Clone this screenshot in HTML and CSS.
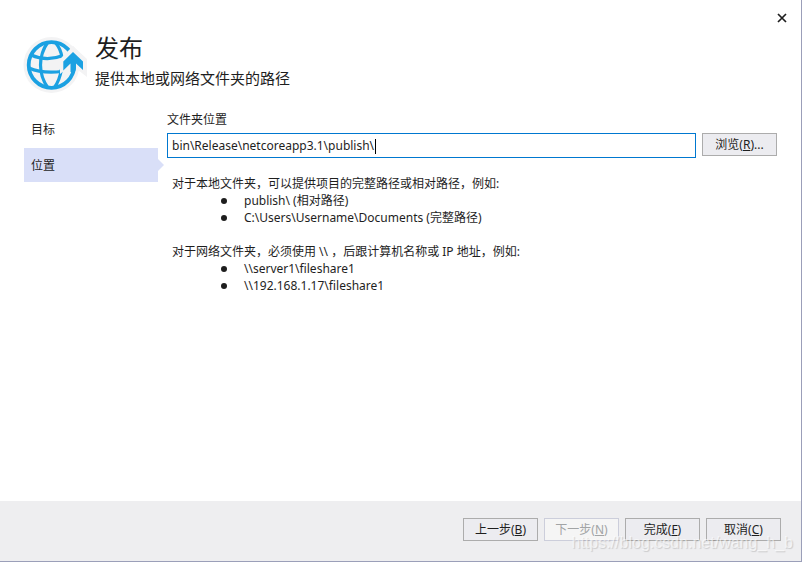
FILE: index.html
```
<!DOCTYPE html>
<html lang="zh-CN">
<head>
	<meta charset="UTF-8">
	<title>发布</title>
	<link rel="stylesheet" href="styles.css">
</head>

<body>
	<div class="dialog">
		<button class="close" type="button" aria-label="关闭">
			<svg width="10" height="10" viewBox="0 0 10 10">
				<path d="M1 1l8 8M9 1l-8 8" fill="none" stroke="#1e1e1e" stroke-width="1.7"/>
			</svg>
		</button>

		<header class="header">
			<svg class="logo" width="67" height="58" viewBox="0 0 67 58">
				<circle cx="31.500" cy="29" r="28" fill="#f3f3f4"/>
				<path d="M53 10L67 24V41L58 34H40V24z" fill="#f3f3f4"/>
				<g fill="none" stroke="#1ba1e2">
					<circle cx="31.500" cy="29" r="22.800" stroke-width="3.800"/>
					<path d="M28 6C18 20 18 38 28 52M35 6C40 12 41.500 16 42 22M41.500 33C40 42 38 47 34 52" stroke-width="3.200"/>
					<path d="M11 19C21 23.500 33 23.500 43 19.500M9 32C19 36.500 30 37 42 35.500" stroke-width="3.200"/>
				</g>
				<!-- gap between the globe and the arrow -->
				<path d="M53 10L40 23V38L49 31H58L67 38V23z" fill="#f3f3f4"/>
				<path d="M53 16L43.300 25.500V34.500L50.500 27.500V36L54.500 37L56 32V27.500L63 34V25.500z" fill="#1ba1e2"/>
			</svg>
			<div>
				<h1>发布</h1>
				<p>提供本地或网络文件夹的路径</p>
			</div>
		</header>

		<div class="content">
			<nav class="steps">
				<a href="#target">目标</a>
				<a class="active" href="#location">位置</a>
			</nav>

			<main class="panel">
				<label for="folder">文件夹位置</label>
				<div class="folder-row">
					<div class="field">
						<input id="folder" type="text" value="bin\Release\netcoreapp3.1\publish\">
						<span class="caret"></span>
					</div>
					<button type="button">浏览(<u>R</u>)...</button>
				</div>

				<div class="help">
					<p>对于本地文件夹，可以提供项目的完整路径或相对路径，例如:</p>
					<ul>
						<li>publish\ (相对路径)</li>
						<li>C:\Users\Username\Documents (完整路径)</li>
					</ul>
					<p>对于网络文件夹，必须使用 \\ ，后跟计算机名称或 IP 地址，例如:</p>
					<ul>
						<li>\\server1\fileshare1</li>
						<li>\\192.168.1.17\fileshare1</li>
					</ul>
				</div>
			</main>
		</div>

		<footer class="footer">
			<button type="button">上一步(<u>B</u>)</button>
			<button type="button" disabled>下一步(<u>N</u>)</button>
			<button type="button">完成(<u>F</u>)</button>
			<button type="button">取消(<u>C</u>)</button>
			<span class="watermark">https://blog.csdn.net/wang_h_b</span>
		</footer>
	</div>
</body>
</html>
```
FILE: styles.css
```
* {
	box-sizing: border-box;
}

body {
	margin: 0;
	background-color: #fff;
	color: #1e1e1e;
	font: 12px/17px "Noto Sans", "Noto Sans CJK SC", sans-serif;
}

h1, p, ul {
	margin: 0;
	padding: 0;
	font-weight: normal;
}

button, input {
	font: inherit;
	color: inherit;
}

button {
	flex: none;
	width: 75px;
	height: 23px;
	padding: 0;
	border: 1px solid #acacac;
	background-color: #ececf0;
}

button:disabled {
	border-color: #cccedb;
	background-color: #f5f5f5;
	color: #a2a4a5;
}

.dialog {
	position: relative;
	display: flex;
	flex-direction: column;
	min-height: 100vh;
	border-right: 1px solid #9b9fb9;
	border-bottom: 1px solid #9b9fb9;
}

.close {
	position: absolute;
	top: 8px;
	right: 9px;
	width: 20px;
	height: 20px;
	border: 0;
	background: none;
}

.close svg {
	display: block;
	margin: auto;
}

/* header */

.header {
	display: flex;
	gap: 8px;
	padding: 32px 20px 0;
	height: 110px;
}

.logo {
	flex: none;
	margin-top: 4px;
}

.header h1 {
	font-size: 24px;
	line-height: 32px;
}

.header p {
	margin-top: 4px;
	font-size: 15px;
	line-height: 20px;
}

/* steps and folder panel */

.content {
	flex: 1;
	display: flex;
	gap: 9px;
	padding: 0 24px;
}

.steps {
	flex: none;
	width: 134px;
	padding-top: 2px;
}

.steps a {
	position: relative;
	display: block;
	margin-bottom: 2px;
	padding: 2px 0 0 7px;
	line-height: 32px;
	color: inherit;
	text-decoration: none;
}

.steps .active {
	background-color: #d9dff8;
}

.steps .active::after {
	content: "";
	position: absolute;
	top: 11px;
	left: 100%;
	border: 6px solid transparent;
	border-left-color: #d9dff8;
	border-right: 0;
}

.panel {
	flex: 1;
}

.panel label {
	display: block;
	line-height: 20px;
}

.folder-row {
	display: flex;
	gap: 6px;
	margin-top: 3px;
}

.field {
	position: relative;
	flex: 1;
}

.field input {
	display: block;
	width: 100%;
	height: 25px;
	padding: 0 4px;
	border: 1px solid #0078d0;
	outline: none;
	background-color: #fff;
}

.caret {
	position: absolute;
	top: 6px;
	left: 208px;
	width: 1px;
	height: 15px;
	background-color: #000;
}

.help {
	margin-top: 17px;
	padding-left: 5px;
}

.help ul {
	margin-bottom: 17px;
	padding-left: 49px;
	list-style: none;
}

.help li {
	display: flex;
	align-items: center;
	gap: 17px;
}

.help li::before {
	content: "";
	width: 6px;
	height: 6px;
	border-radius: 50%;
	background-color: #1e1e1e;
}

/* footer */

.footer {
	position: relative;
	display: flex;
	justify-content: flex-end;
	gap: 6px;
	height: 60px;
	padding: 17px 20px 0;
	background-color: #eeeef0;
}

.watermark {
	position: absolute;
	right: 8px;
	bottom: 8px;
	font: 16px/20px "Liberation Sans", sans-serif;
	color: rgba(255, 255, 255, 0.6);
	text-shadow: 1px 1px 1px rgba(0, 0, 0, 0.15);
	pointer-events: none;
}
```
